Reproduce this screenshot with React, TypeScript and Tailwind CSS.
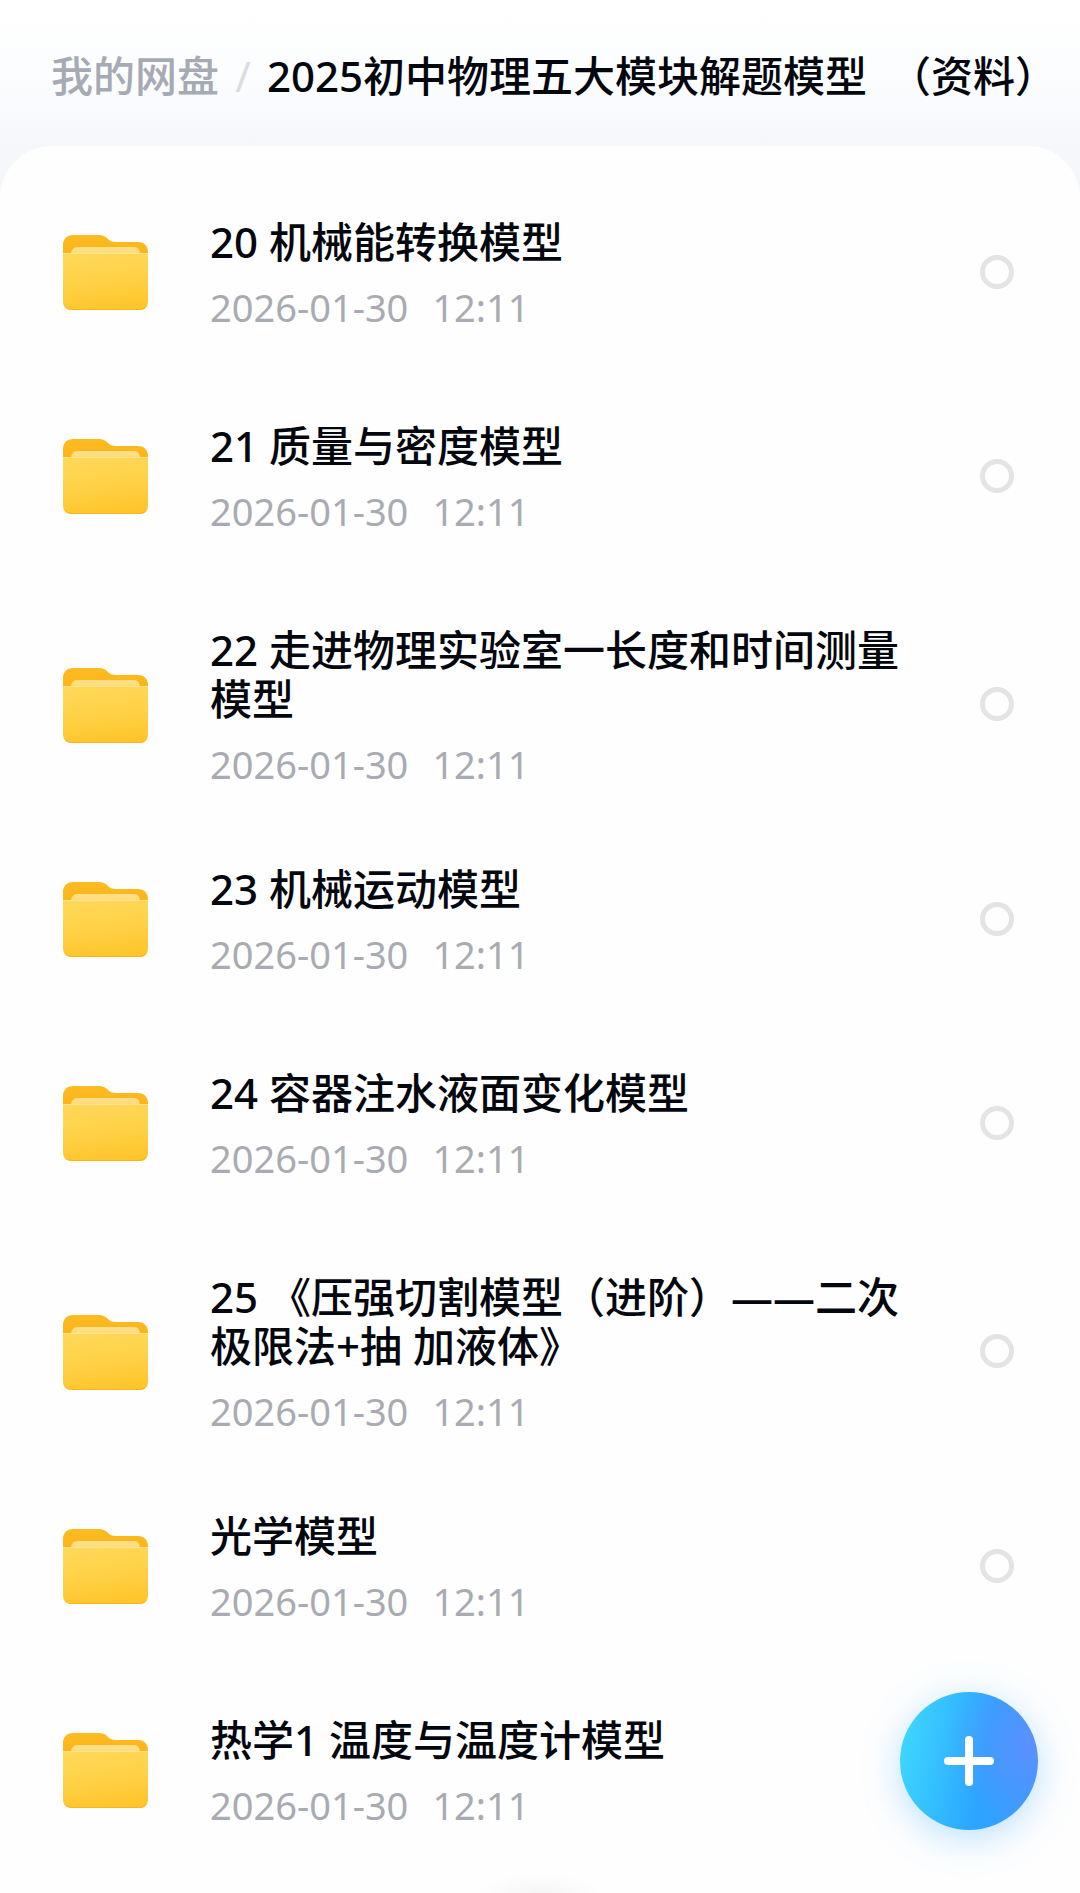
import { useState } from 'react';

interface Folder {
  id: string;
  name: string;
  date: string;
  time: string;
}

const FOLDERS: Folder[] = [
  { id: '20', name: '20 机械能转换模型', date: '2026-01-30', time: '12:11' },
  { id: '21', name: '21 质量与密度模型', date: '2026-01-30', time: '12:11' },
  { id: '22', name: '22 走进物理实验室一长度和时间测量模型', date: '2026-01-30', time: '12:11' },
  { id: '23', name: '23 机械运动模型', date: '2026-01-30', time: '12:11' },
  { id: '24', name: '24 容器注水液面变化模型', date: '2026-01-30', time: '12:11' },
  { id: '25', name: '25 《压强切割模型（进阶）——二次极限法+抽 加液体》', date: '2026-01-30', time: '12:11' },
  { id: 'optics', name: '光学模型', date: '2026-01-30', time: '12:11' },
  { id: 'heat', name: '热学1 温度与温度计模型', date: '2026-01-30', time: '12:11' },
];

function FolderIcon() {
  return (
    <svg className="w-[85px] h-[77px] shrink-0" viewBox="0 -2 85 77" aria-hidden="true">
      <defs>
        <linearGradient id="folder-back" x1="0" y1="0" x2="0" y2="1">
          <stop offset="0" stopColor="#fdbc22" />
          <stop offset="1" stopColor="#f9ab10" />
        </linearGradient>
        <linearGradient id="folder-paper" x1="0" y1="0" x2="0" y2="1">
          <stop offset="0" stopColor="#ffe08a" />
          <stop offset="1" stopColor="#ffd868" />
        </linearGradient>
        <linearGradient id="folder-front" x1="0.3" y1="0" x2="0.5" y2="1">
          <stop offset="0" stopColor="#ffd859" />
          <stop offset="0.6" stopColor="#ffcf42" />
          <stop offset="1" stopColor="#ffc52b" />
        </linearGradient>
      </defs>
      <path
        d="M0 10C0 4 4 0 10 0H36C40 0 42 1 45 4C47 6 49 7 53 7H75C81 7 85 11 85 17V40H0Z"
        fill="url(#folder-back)"
      />
      <path d="M8 20C8 15 10 12 15 12H71C75 12 77 15 77 20V26H8Z" fill="url(#folder-paper)" />
      <path d="M0 18H85V66C85 72 82 75 76 75H9C3 75 0 72 0 66Z" fill="url(#folder-front)" />
      <path d="M0 18H85V19H0Z" fill="#ffe48a" />
      <path d="M2 71C4 74 6 75 9 75H76C79 75 82 74 83 71C81 73 79 74 76 74H9C6 74 4 73 2 71Z" fill="#f9b51d" />
    </svg>
  );
}

interface FolderRowProps {
  folder: Folder;
  checked: boolean;
  onToggle: () => void;
}

function FolderRow({ folder, checked, onToggle }: FolderRowProps) {
  const inputId = `folder-${folder.id}`;

  return (
    <li className="min-h-[204px] pb-[81px] last:min-h-0 last:pb-0">
      <div className="flex items-center">
        <FolderIcon />
        <label htmlFor={inputId} className="flex-1 min-w-0 ml-[62px] mr-[60px]">
          <span className="block text-[42px] leading-[49px] font-medium text-[#05070f]">{folder.name}</span>
          <span className="flex gap-[24px] mt-[22px] text-[38px] leading-[38px] text-[#a9abb2]">
            <span>{folder.date}</span>
            <span>{folder.time}</span>
          </span>
        </label>
        <input
          id={inputId}
          type="checkbox"
          checked={checked}
          onChange={onToggle}
          className="appearance-none w-[34px] h-[34px] shrink-0 rounded-full border-5 border-[#e4e4e4] checked:bg-[#2ba0ff]"
        />
      </div>
    </li>
  );
}

export default function App() {
  const [selected, setSelected] = useState<string[]>([]);

  const toggle = (id: string) => {
    setSelected((prev) => (prev.includes(id) ? prev.filter((item) => item !== id) : [...prev, id]));
  };

  return (
    <div className="min-h-screen bg-[#f6f7fb] font-['Noto_Sans','Noto_Sans_CJK_SC',sans-serif]" lang="zh-CN">
      <header className="bg-linear-to-b from-white via-[#fcfdfe] to-[#f6f7fb] pt-[51px] pb-[46px] pl-[51px]">
        <nav className="flex items-center whitespace-pre text-[42px] leading-[49px] font-medium" aria-label="路径">
          <a href="#root" className="text-[#a6aab5]">我的网盘</a>
          <span className="w-[48px] text-center font-normal text-[#dcdde1]">/</span>
          <h1 className="text-[#05070f]">2025初中物理五大模块解题模型  （资料）</h1>
        </nav>
      </header>

      <main className="rounded-t-[52px] bg-[#fefefe] pt-[71px] pb-[69px] pl-[63px] pr-[66px]">
        <ul>
          {FOLDERS.map((folder) => (
            <FolderRow
              key={folder.id}
              folder={folder}
              checked={selected.includes(folder.id)}
              onToggle={() => toggle(folder.id)}
            />
          ))}
        </ul>
      </main>

      <div className="fixed bottom-0 left-1/2 -translate-x-1/2 w-[130px] h-[20px] bg-[radial-gradient(ellipse_at_bottom,#f5f5f5,#fefefe_70%)]" />

      <button
        type="button"
        aria-label="新建"
        className="fixed right-[42px] bottom-[63px] flex items-center justify-center w-[138px] h-[138px] rounded-full bg-[radial-gradient(circle_at_98%_38%,#5c90ff,transparent_55%),linear-gradient(100deg,#3dd4ff_8%,#2ba5ff_60%,#3c9aff)] shadow-[0_8px_36px_rgba(60,170,255,0.35)]"
      >
        <svg className="w-[52px] h-[52px]" viewBox="0 0 52 52" stroke="#fff" strokeWidth="8" strokeLinecap="round">
          <path d="M26 5V47M5 26H47" />
        </svg>
      </button>
    </div>
  );
}
